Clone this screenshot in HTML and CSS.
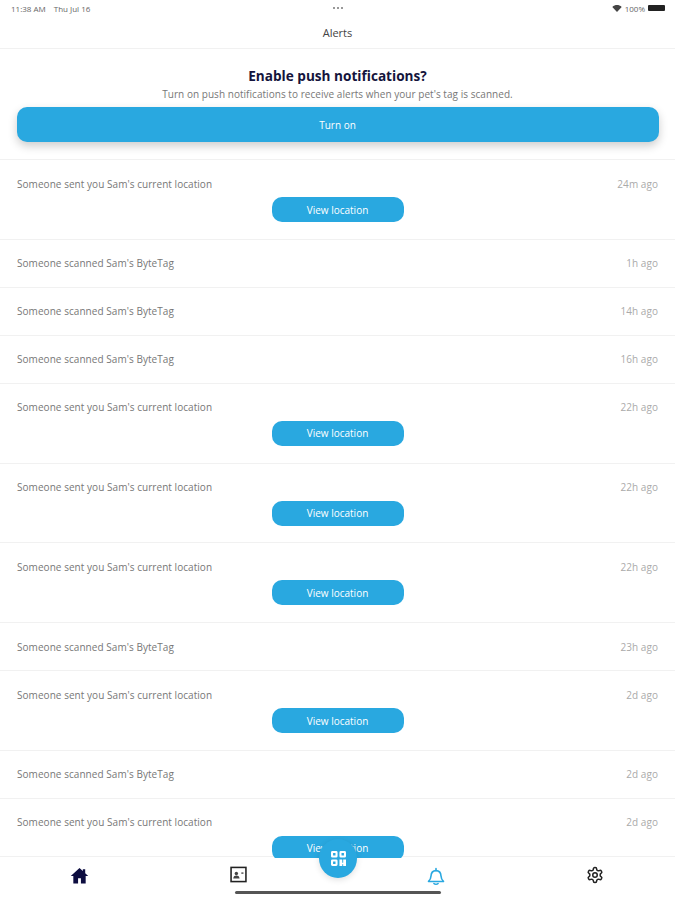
FILE: index.html
```html
<!DOCTYPE html>
<html lang="en">

<head>
  <meta charset="UTF-8">
  <meta name="viewport" content="width=device-width, initial-scale=1.0">
  <title>Alerts</title>
  <link rel="stylesheet" href="styles.css">
</head>

<body>

  <div class="app">
    <div class="status-bar">
      <span class="status-time"><span>11:38 AM</span><span>Thu Jul 16</span></span>
      <span class="status-dots"><i></i><i></i><i></i></span>
      <span class="status-right">
        <svg class="wifi" viewBox="0 0 12 9" width="10" height="7"><path d="M6 9 0 2.600C3.500-.8 8.500-.8 12 2.600z" /></svg>
        <span>100%</span>
        <span class="battery"></span>
      </span>
    </div>

    <header class="page-header">Alerts</header>

    <section class="push-card">
      <h2>Enable push notifications?</h2>
      <p>Turn on push notifications to receive alerts when your pet's tag is scanned.</p>
      <button class="btn-turn-on">Turn on</button>
    </section>

    <div class="alert-list">
      <div class="alert alert-tall">
        <div class="alert-line"><span>Someone sent you Sam's current location</span><span class="ago">24m ago</span></div>
        <button class="btn-view">View location</button>
      </div>
      <div class="alert">
        <div class="alert-line"><span>Someone scanned Sam's ByteTag</span><span class="ago">1h ago</span></div>
      </div>
      <div class="alert">
        <div class="alert-line"><span>Someone scanned Sam's ByteTag</span><span class="ago">14h ago</span></div>
      </div>
      <div class="alert">
        <div class="alert-line"><span>Someone scanned Sam's ByteTag</span><span class="ago">16h ago</span></div>
      </div>
      <div class="alert alert-tall">
        <div class="alert-line"><span>Someone sent you Sam's current location</span><span class="ago">22h ago</span></div>
        <button class="btn-view">View location</button>
      </div>
      <div class="alert alert-tall">
        <div class="alert-line"><span>Someone sent you Sam's current location</span><span class="ago">22h ago</span></div>
        <button class="btn-view">View location</button>
      </div>
      <div class="alert alert-tall">
        <div class="alert-line"><span>Someone sent you Sam's current location</span><span class="ago">22h ago</span></div>
        <button class="btn-view">View location</button>
      </div>
      <div class="alert">
        <div class="alert-line"><span>Someone scanned Sam's ByteTag</span><span class="ago">23h ago</span></div>
      </div>
      <div class="alert alert-tall">
        <div class="alert-line"><span>Someone sent you Sam's current location</span><span class="ago">2d ago</span></div>
        <button class="btn-view">View location</button>
      </div>
      <div class="alert">
        <div class="alert-line"><span>Someone scanned Sam's ByteTag</span><span class="ago">2d ago</span></div>
      </div>
      <div class="alert alert-tall">
        <div class="alert-line"><span>Someone sent you Sam's current location</span><span class="ago">2d ago</span></div>
        <button class="btn-view">View location</button>
      </div>
    </div>

    <nav class="tab-bar">
      <svg class="tab-icon" viewBox="0 0 24 24" width="19" height="19" fill="#0d0d40"><path d="M12 2.500 1 12.600h3.200V22h6v-6.600h3.600V22h6v-9.400H23l-3.800-3.500V4h-3v2.400z" /></svg>
      <svg class="tab-icon" viewBox="0 0 24 24" width="17" height="17" fill="none" stroke="#222" stroke-width="2.200"><rect x="1.500" y="2" width="21" height="20" /><circle cx="9" cy="10.500" r="2.400" fill="#444" stroke="none" /><path d="M4.500 17.500c.5-3 2.200-4 4.500-4s4 1 4.500 4z" fill="#444" stroke="none" /><path d="M16 10h3" stroke-width="1.600" /></svg>
      <span class="tab-gap"></span>
      <svg class="tab-icon" viewBox="0 0 24 24" width="20" height="20" fill="none" stroke="#29a8e0" stroke-width="1.900"><path d="M3 18.500c2-1.600 2.800-3.400 3-6.500.2-4 2.400-6.500 6-6.500s5.800 2.500 6 6.500c.2 3.100 1 4.900 3 6.500z" stroke-linejoin="round" /><path d="M12 3v2.500M9.500 21c1.200 1.200 3.800 1.200 5 0" stroke-linecap="round" /></svg>
      <svg class="tab-icon" viewBox="0 0 24 24" width="18" height="18" fill="none" stroke="#222" stroke-width="2"><path d="M12.220 2h-.44a2 2 0 0 0-2 2v.18a2 2 0 0 1-1 1.730l-.43.25a2 2 0 0 1-2 0l-.15-.08a2 2 0 0 0-2.730.73l-.22.38a2 2 0 0 0 .73 2.730l.15.1a2 2 0 0 1 1 1.720v.51a2 2 0 0 1-1 1.740l-.15.09a2 2 0 0 0-.73 2.730l.22.38a2 2 0 0 0 2.730.73l.15-.08a2 2 0 0 1 2 0l.43.25a2 2 0 0 1 1 1.730V20a2 2 0 0 0 2 2h.44a2 2 0 0 0 2-2v-.18a2 2 0 0 1 1-1.730l.43-.25a2 2 0 0 1 2 0l.15.08a2 2 0 0 0 2.730-.73l.22-.39a2 2 0 0 0-.73-2.730l-.15-.08a2 2 0 0 1-1-1.740v-.5a2 2 0 0 1 1-1.740l.15-.09a2 2 0 0 0 .73-2.730l-.22-.38a2 2 0 0 0-2.730-.73l-.15.08a2 2 0 0 1-2 0l-.43-.25a2 2 0 0 1-1-1.730V4a2 2 0 0 0-2-2z" /><circle cx="12" cy="12" r="3" /></svg>
    </nav>

    <button class="fab" aria-label="Scan code">
      <svg viewBox="0 0 16 16" width="15" height="15" fill="#fff"><path fill-rule="evenodd" d="M0 1.500A1.500 1.500 0 0 1 1.500 0h4A1.500 1.500 0 0 1 7 1.500v4A1.500 1.500 0 0 1 5.500 7h-4A1.500 1.500 0 0 1 0 5.500zM2.200 2.200v2.600h2.600V2.200zM9 1.500A1.500 1.500 0 0 1 10.500 0h4A1.500 1.500 0 0 1 16 1.500v4A1.500 1.500 0 0 1 14.500 7h-4A1.500 1.500 0 0 1 9 5.500zM11.200 2.200v2.600h2.600V2.200zM0 10.500A1.500 1.500 0 0 1 1.500 9h4A1.500 1.500 0 0 1 7 10.500v4A1.500 1.500 0 0 1 5.500 16h-4A1.500 1.500 0 0 1 0 14.500zM2.200 11.200v2.600h2.600v-2.600zM9 9h3v3.500h1V9h3v7h-3v-2h-1v2H9z" /></svg>
    </button>

    <div class="home-indicator"></div>
  </div>

</body>

</html>
```

FILE: styles.css
```css
body {
  margin: 0;
  background: #fff;
  font-family: "Open Sans", "Lato", sans-serif;
  color: #555;
}

.app {
  position: relative;
  display: flex;
  flex-direction: column;
  width: 675px;
  height: 900px;
  overflow: hidden;
  background: #fff;
}

.status-bar {
  display: grid;
  grid-template-columns: 1fr auto 1fr;
  align-items: center;
  height: 16px;
  padding: 0 10px 0 11px;
  font-size: 8px;
  color: #666;
}

.status-time {
  display: flex;
  gap: 8px;
}

.status-dots {
  display: flex;
  gap: 2px;
}

.status-dots i {
  width: 2px;
  height: 2px;
  border-radius: 50%;
  background: #777;
}

.status-right {
  display: flex;
  justify-content: flex-end;
  align-items: center;
  gap: 3px;
}

.wifi {
  fill: #444;
}

.battery {
  width: 17px;
  height: 6px;
  border-radius: 1px;
  background: #222;
}

.page-header {
  display: flex;
  justify-content: center;
  align-items: center;
  height: 32px;
  border-bottom: 1px solid #f1f1f1;
  font-size: 11px;
  color: #444;
}

.push-card {
  box-sizing: border-box;
  height: 111px;
  padding-top: 19px;
  text-align: center;
  border-bottom: 1px solid #f1f1f1;
}

.push-card h2 {
  margin: 0;
  height: 16px;
  line-height: 16px;
  font-size: 13.6px;
  font-weight: 700;
  color: #14143c;
}

.push-card p {
  margin: 2px 0 0;
  height: 16px;
  line-height: 16px;
  font-size: 10px;
  letter-spacing: 0.04px;
  color: #777;
}

.btn-turn-on {
  display: block;
  width: 642px;
  height: 35px;
  margin: 5px auto 0;
  border: none;
  border-radius: 10px;
  background: #29a8e0;
  box-shadow: 0 4px 10px rgba(0, 0, 0, 0.2);
  color: #fff;
  font-family: inherit;
  font-size: 10px;
}

.alert-list {
  position: relative;
  z-index: 1;
  height: 698px;
  overflow: hidden;
}

.alert {
  box-sizing: border-box;
  height: 48px;
  padding: 0 17px;
  border-bottom: 1px solid #f1f1f1;
}

.alert-tall {
  height: 79.75px;
}

.alert-line {
  display: flex;
  justify-content: space-between;
  align-items: center;
  height: 47px;
  font-size: 10px;
  letter-spacing: 0.05px;
  color: #777;
}

.ago {
  color: #aaa;
}

.btn-view {
  display: block;
  width: 132px;
  height: 25px;
  margin: -10px auto 0;
  border: none;
  border-radius: 10px;
  background: #29a8e0;
  color: #fff;
  font-family: inherit;
  font-size: 10px;
}

.tab-bar {
  display: grid;
  grid-template-columns: 1fr 1fr 38px 1fr 1fr;
  justify-items: center;
  align-items: start;
  box-sizing: border-box;
  height: 44px;
  margin-top: -2px;
  padding-top: 9px;
  border-top: 1px solid #f1f1f1;
  background: #fff;
}

.fab {
  position: absolute;
  z-index: 2;
  left: 319px;
  top: 839px;
  display: flex;
  justify-content: center;
  align-items: center;
  width: 38px;
  height: 39px;
  padding: 0;
  border: none;
  border-radius: 50%;
  background: #29a8e0;
  box-shadow: 0 2px 6px rgba(0, 0, 0, 0.12);
}

.home-indicator {
  position: absolute;
  left: 235px;
  bottom: 6px;
  width: 206px;
  height: 3px;
  border-radius: 2px;
  background: #555;
}
```
